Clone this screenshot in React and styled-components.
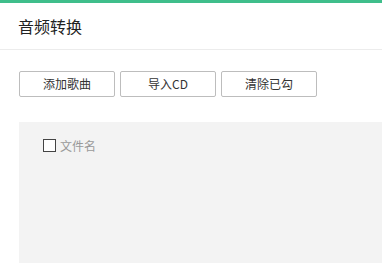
import React from "react";
import styled, { createGlobalStyle } from "styled-components";

const Global = createGlobalStyle`
  html, body { margin: 0; padding: 0; background: #fff; }
  body { font-family: "Noto Sans CJK SC", "Noto Sans", sans-serif; color: #333; overflow: hidden; }
`;

const Page = styled.div`
  width: 382px;
  height: 263px;
  border-top: 3px solid #3fbe8b;
  box-sizing: border-box;
  display: flex;
  flex-direction: column;
  overflow: hidden;
`;

const Header = styled.div`
  height: 47px;
  border-bottom: 1px solid #ececec;
  display: flex;
  align-items: center;
  padding-left: 18px;
  box-sizing: border-box;
  font-size: 16px;
  color: #222;
`;

const Toolbar = styled.div`
  display: flex;
  gap: 5px;
  padding: 21px 0 0 19px;
`;

const Button = styled.button`
  width: 96px;
  height: 26px;
  box-sizing: border-box;
  border: 1px solid #bdbdbd;
  border-radius: 2px;
  background: #fff;
  font-family: "Noto Sans CJK SC", "Noto Sans", sans-serif;
  font-size: 12px;
  color: #333;
  padding: 0;
  line-height: 24px;
`;

const Panel = styled.div`
  flex: 1;
  margin: 25px 0 0 19px;
  background: #f3f3f3;
  padding: 15px 0 0 24px;
`;

const Row = styled.label`
  display: flex;
  align-items: center;
  gap: 4px;
  font-size: 12px;
  color: #999;
`;

const Box = styled.span`
  width: 13px;
  height: 13px;
  box-sizing: border-box;
  border: 1px solid #444;
  background: #fff;
  display: inline-block;
`;

export default function App() {
  return (
    <>
      <Global />
      <Page>
        <Header>音频转换</Header>
        <Toolbar>
          <Button>添加歌曲</Button>
          <Button>导入CD</Button>
          <Button>清除已勾</Button>
        </Toolbar>
        <Panel>
          <Row>
            <Box />
            文件名
          </Row>
        </Panel>
      </Page>
    </>
  );
}
